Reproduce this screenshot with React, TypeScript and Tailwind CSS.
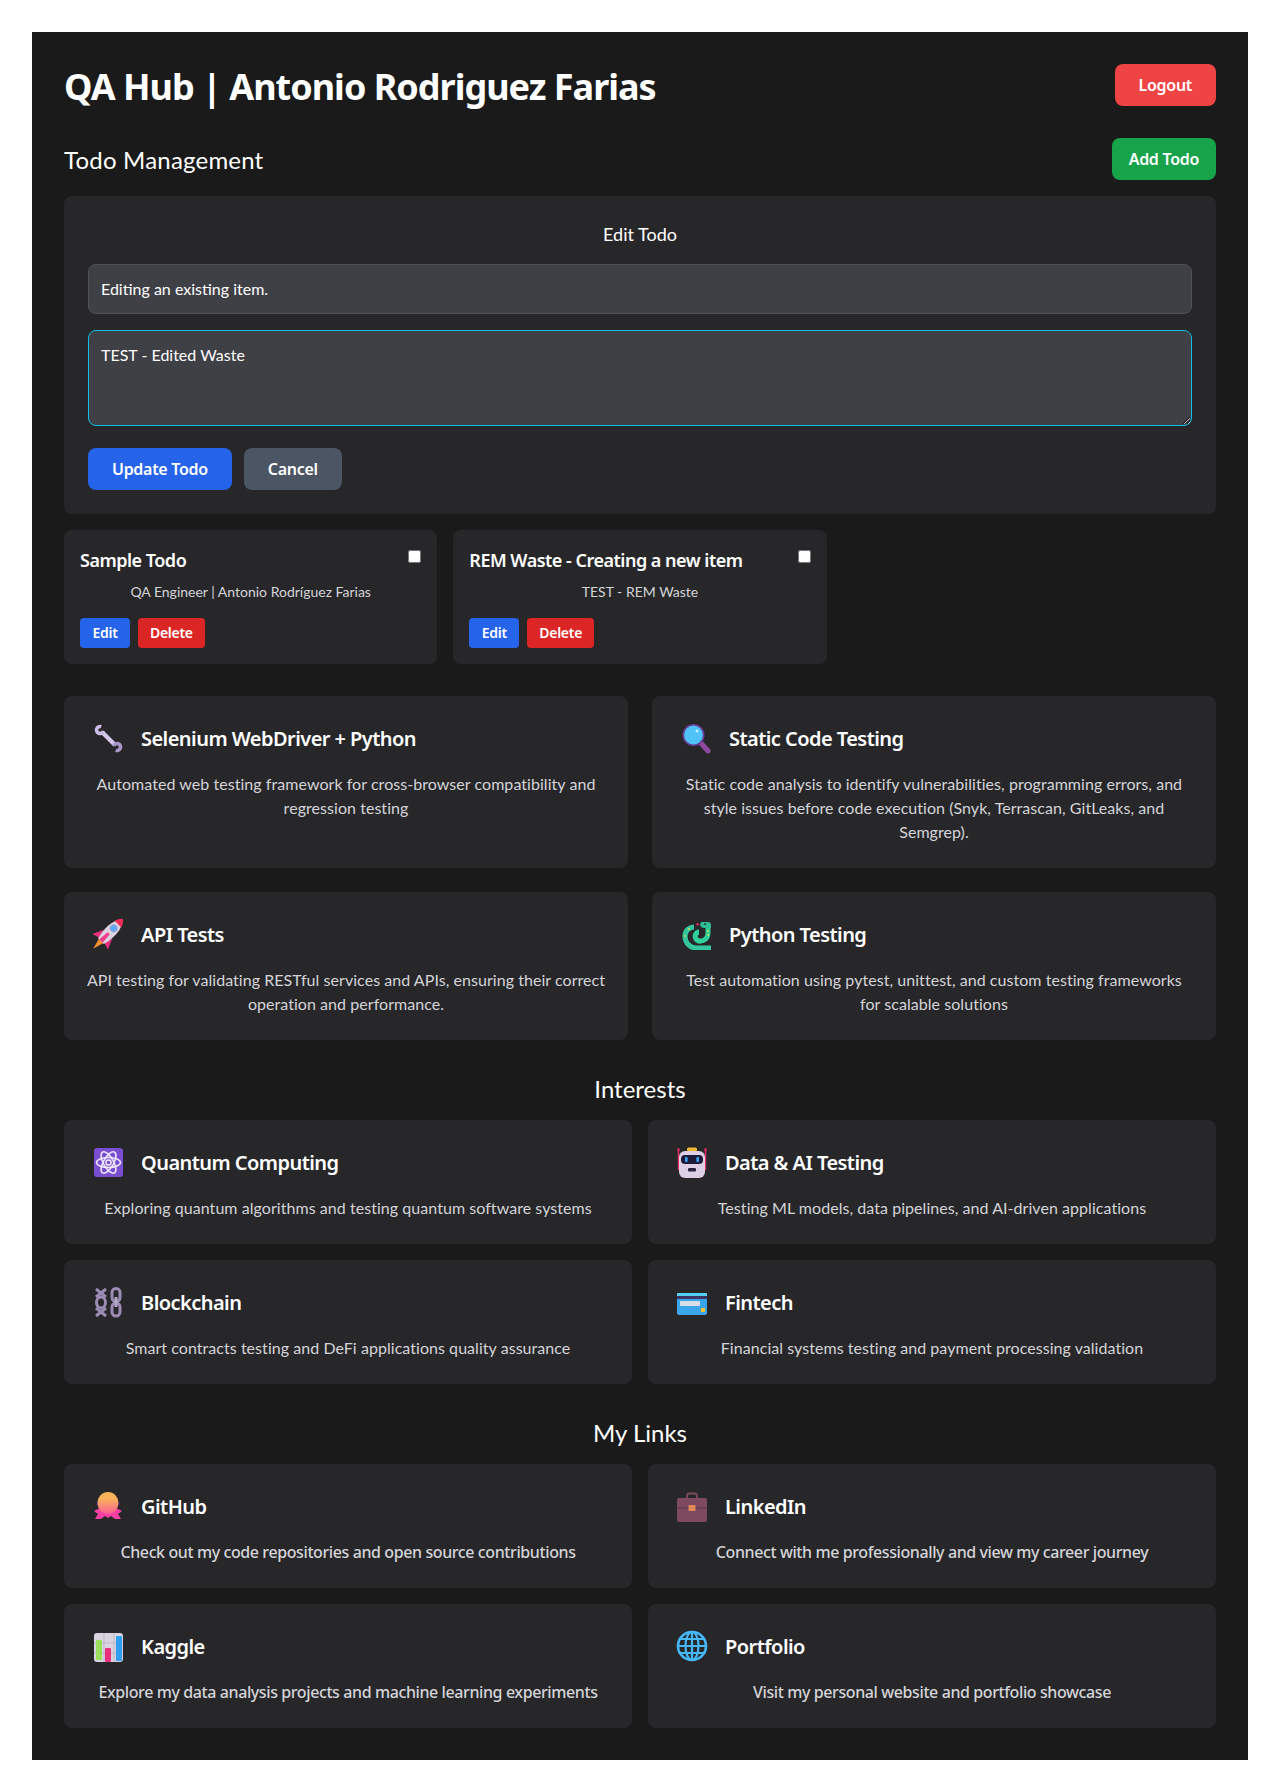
import type { ReactNode } from "react"

const Svg = ({ children }: { children: ReactNode }) => (
  <svg viewBox="0 0 32 32" className="w-8 h-8 shrink-0">
    {children}
  </svg>
)

const Wrench = () => (
  <Svg>
    <path d="M10 10 L23 23" stroke="#d6c8ec" strokeWidth="4.2" />
    <path d="M9.2 4.7 A3.5 3.5 0 1 0 11.3 9.2" fill="none" stroke="#cbbce4" strokeWidth="3.6" />
    <path d="M23.8 28.3 A3.5 3.5 0 1 0 21.7 23.8" fill="none" stroke="#a898ca" strokeWidth="3.6" />
  </Svg>
)

const Magnifier = () => (
  <Svg>
    <path d="M20 20 L28 29" stroke="#8f4aa0" strokeWidth="5" strokeLinecap="round" />
    <circle cx="13.5" cy="13" r="10.2" fill="#4fc3f7" stroke="#6b3d96" strokeWidth="1.6" />
    <circle cx="17" cy="9" r="1.6" fill="#b8ecff" />
  </Svg>
)

const Rocket = () => (
  <Svg>
    <g transform="rotate(45 16 16)">
      <path d="M13 26 L19 26 L16 37 Z" fill="#f5902e" />
      <path d="M10 16 L5 27 L12 25 Z" fill="#ec2f7e" />
      <path d="M22 16 L27 27 L20 25 Z" fill="#ec2f7e" />
      <path d="M16 -5 C23 2 23 16 20 26 L12 26 C9 16 9 2 16 -5 Z" fill="#dcd4e2" />
      <path d="M16 -5 C18.5 -3 20 -0.5 20.7 2 L11.3 2 C12 -0.5 13.5 -3 16 -5 Z" fill="#ef2b55" />
      <circle cx="16" cy="8" r="3.4" fill="#5aa9fa" stroke="#9aa0c8" strokeWidth="1" />
      <path d="M13.5 26 L18.5 26 L17.5 15 L14.5 15 Z" fill="#f0408c" />
    </g>
  </Svg>
)

const Snake = () => (
  <Svg>
    <path d="M31 30 H17 C9 30 5 24 5 18 C5 12 10 9 14 9" fill="none" stroke="#35c6a0" strokeWidth="5" />
    <path d="M28 7 V15 C28 23 19 25 16 21 C14 18 16 14 19 14" fill="none" stroke="#2fcf9a" strokeWidth="5" />
    <path d="M21 4 H28 Q31 4 31 7 V10 H24 Q21 10 20 7 Z" fill="#2dbd96" />
    <path d="M20 6 L16 5 L17 8 Z" fill="#e8275f" />
    <circle cx="25" cy="6" r="0.9" fill="#14302c" />
    <circle cx="28" cy="13" r="0.9" fill="#d6e04a" />
    <circle cx="28" cy="17" r="0.9" fill="#d6e04a" />
    <circle cx="5" cy="18" r="0.9" fill="#d6e04a" />
    <circle cx="9" cy="11" r="0.9" fill="#d6e04a" />
  </Svg>
)

const Atom = () => (
  <Svg>
    <rect x="2" y="2" width="29" height="29" rx="3" fill="#7a4ed0" />
    <g fill="none" stroke="#f1e9ff" strokeWidth="1.5">
      <ellipse cx="16.5" cy="16.5" rx="12" ry="5" />
      <ellipse cx="16.5" cy="16.5" rx="12" ry="5" transform="rotate(60 16.5 16.5)" />
      <ellipse cx="16.5" cy="16.5" rx="12" ry="5" transform="rotate(120 16.5 16.5)" />
      <circle cx="16.5" cy="16.5" r="2.6" />
    </g>
  </Svg>
)

const Robot = () => (
  <Svg>
    <path d="M2.5 4 V24 M29.5 4 V24" stroke="#e8285f" strokeWidth="1.4" />
    <circle cx="2.5" cy="3.5" r="1.2" fill="#ef2b6b" />
    <circle cx="29.5" cy="3.5" r="1.2" fill="#ef2b6b" />
    <rect x="11" y="1.5" width="10" height="4" rx="1.5" fill="#f2b632" />
    <rect x="3" y="5" width="26" height="27" rx="6" fill="#dccfe6" />
    <rect x="5" y="9" width="22" height="9" rx="4" fill="#1e1b3a" />
    <rect x="9" y="11" width="2.6" height="5" rx="1" fill="#38a6f5" />
    <rect x="20.4" y="11" width="2.6" height="5" rx="1" fill="#38a6f5" />
    <rect x="12" y="22" width="8" height="3.4" rx="1.2" fill="#2b2540" />
  </Svg>
)

const Chain = () => (
  <Svg>
    <g fill="none" stroke="#9c8cb4" strokeWidth="3">
      <ellipse cx="9" cy="16.5" rx="4.5" ry="5.5" />
      <path d="M4 3 L14 11 M14 3 L4 11 M4 22 L14 30 M14 22 L4 30" />
      <rect x="20" y="2.5" width="8" height="13" rx="4" />
      <rect x="20" y="17" width="8" height="13" rx="4" />
    </g>
    <path d="M24 11 V21" stroke="#b5a8c8" strokeWidth="3" />
  </Svg>
)

const CreditCard = () => (
  <Svg>
    <rect x="1" y="7" width="30" height="22" rx="2" fill="#38a6e8" />
    <rect x="1" y="7" width="30" height="3.5" fill="#4fd0f0" />
    <rect x="1" y="10" width="30" height="3" fill="#3b3566" />
    <rect x="4" y="15" width="20" height="5" rx="1" fill="#d9dde6" />
    <rect x="25" y="22" width="4" height="4" fill="#f4c430" />
  </Svg>
)

const Octopus = () => (
  <Svg>
    <circle cx="5.5" cy="14" r="1.6" fill="#3d2a6b" />
    <circle cx="26.5" cy="14" r="1.6" fill="#3d2a6b" />
    <path d="M2 21 L8 18 H24 L30 21 L26 24 L29 29 L23 29 L19 26 L16 28 L13 26 L9 29 L3 29 L6 24 Z" fill="#f63fa2" />
    <ellipse cx="16" cy="13" rx="10.5" ry="11" fill="url(#octo)" />
    <defs>
      <linearGradient id="octo" x1="0" y1="0" x2="0" y2="1">
        <stop offset="0.3" stopColor="#f7b25a" />
        <stop offset="1" stopColor="#fb5f94" />
      </linearGradient>
    </defs>
  </Svg>
)

const Briefcase = () => (
  <Svg>
    <path d="M11 9 V6 Q11 3.5 13.5 3.5 H18.5 Q21 3.5 21 6 V9" fill="none" stroke="#7a4a5a" strokeWidth="1.8" />
    <rect x="1" y="8" width="30" height="24" rx="2" fill="#7d4a60" />
    <path d="M1 18 H31" stroke="#5d3450" strokeWidth="1" />
    <rect x="12.5" y="15" width="7" height="6" rx="1" fill="#e08a5a" />
  </Svg>
)

const Bars = () => (
  <Svg>
    <rect x="2" y="3" width="29" height="29" rx="3" fill="#d8d4e0" />
    <path d="M12 3 V32 M22 3 V32 M2 13 H31 M2 23 H31" stroke="#bdb8c8" strokeWidth="1" />
    <rect x="4" y="10" width="6" height="20" rx="1" fill="#9be05a" />
    <rect x="13" y="18" width="6" height="14" rx="1" fill="#ea2f7c" />
    <rect x="24" y="6" width="6" height="25" rx="1" fill="#2f9df0" />
  </Svg>
)

const Globe = () => (
  <Svg>
    <g fill="none" stroke="#45b8fa" strokeWidth="2.2">
      <circle cx="16" cy="16" r="14" strokeWidth="2.6" />
      <ellipse cx="16" cy="16" rx="6.5" ry="14" />
      <path d="M16 2 V30 M2 16 H30 M4 9 H28 M4 23 H28" />
    </g>
  </Svg>
)

const heavy = "font-['Noto_Sans',sans-serif] font-semibold"

function InfoCard({ icon, title, text, links }: { icon: ReactNode; title: string; text: string; links?: boolean }) {
  return (
    <div className="bg-[#27272a] rounded-lg p-6">
      <div className="flex items-center gap-[13px] h-9 mb-4">
        <div className="w-10 flex justify-center shrink-0">{icon}</div>
        <h3 className={`${heavy} text-xl tracking-[-0.55px] pt-0.5 text-white`}>{title}</h3>
      </div>
      <p
        className={
          links
            ? "-mx-0.5 text-center text-[#d4d4d8] font-['Noto_Sans',sans-serif] font-medium tracking-[-0.4px]"
            : "-mx-0.5 text-center text-[#d4d4d8] tracking-[0.05px]"
        }
      >
        {text}
      </p>
    </div>
  )
}

function TodoCard({ title, text }: { title: string; text: string }) {
  return (
    <div className="bg-[#27272a] rounded-lg p-4">
      <div className="flex justify-between items-start mb-2">
        <h3 className={`${heavy} text-lg tracking-[-0.5px] text-white`}>{title}</h3>
        <input type="checkbox" className="w-[13px] h-[13px] mt-1" />
      </div>
      <p className="text-sm text-center text-[#d4d4d8]">{text}</p>
      <div className="flex gap-2 mt-4">
        <button className={`${heavy} h-[30px] px-[12.5px] rounded bg-[#2563eb] text-white text-sm tracking-[-0.3px]`}>Edit</button>
        <button className={`${heavy} h-[30px] px-3 rounded bg-[#dc2626] text-white text-sm tracking-[-0.3px]`}>Delete</button>
      </div>
    </div>
  )
}

export default function App() {
  return (
    <div className="bg-white p-8 font-['Lato','Liberation_Sans',sans-serif]">
      <div className="bg-[#1a1a1a] p-8 text-white h-[1728px]">
        <div className="flex justify-between items-center mb-8">
          <h1 className="font-['Noto_Sans',sans-serif] font-bold text-4xl leading-[38px] tracking-[-1px] pt-1">QA Hub | Antonio Rodriguez Farias</h1>
          <button className={`${heavy} h-[42px] px-6 rounded-lg bg-[#ef4444] text-white tracking-[-0.3px]`}>Logout</button>
        </div>

        <div className="flex justify-between items-center mb-4">
          <h2 className="text-2xl tracking-[0.2px] pt-0.5">Todo Management</h2>
          <button className={`${heavy} h-[42px] px-[17px] rounded-lg bg-[#16a34a] text-white tracking-[-0.3px]`}>Add Todo</button>
        </div>

        <div className="bg-[#27272a] rounded-lg p-6 mb-4">
          <h3 className="text-lg text-center mb-4">Edit Todo</h3>
          <input
            defaultValue="Editing an existing item."
            className="block w-full py-3 px-3 mb-4 rounded-lg bg-[#3f3f46] border border-[#52525b] text-white"
          />
          <textarea
            defaultValue="TEST - Edited Waste"
            className="block w-full h-24 py-3 px-3 mb-[22px] rounded-lg bg-[#3f3f46] border border-[#0cc0e4] text-white"
          />
          <div className="flex gap-3">
            <button className={`${heavy} h-[42px] px-6 rounded-lg bg-[#2563eb] text-white tracking-[-0.3px]`}>Update Todo</button>
            <button className={`${heavy} h-[42px] px-6 rounded-lg bg-[#4b5563] text-white tracking-[-0.3px]`}>Cancel</button>
          </div>
        </div>

        <div className="grid grid-cols-3 gap-4 mb-8">
          <TodoCard title="Sample Todo" text="QA Engineer | Antonio Rodríguez Farias" />
          <TodoCard title="REM Waste - Creating a new item" text="TEST - REM Waste" />
        </div>

        <div className="grid grid-cols-2 gap-6">
          <InfoCard
            icon={<Wrench />}
            title="Selenium WebDriver + Python"
            text="Automated web testing framework for cross-browser compatibility and regression testing"
          />
          <InfoCard
            icon={<Magnifier />}
            title="Static Code Testing"
            text="Static code analysis to identify vulnerabilities, programming errors, and style issues before code execution (Snyk, Terrascan, GitLeaks, and Semgrep)."
          />
          <InfoCard
            icon={<Rocket />}
            title="API Tests"
            text="API testing for validating RESTful services and APIs, ensuring their correct operation and performance."
          />
          <InfoCard
            icon={<Snake />}
            title="Python Testing"
            text="Test automation using pytest, unittest, and custom testing frameworks for scalable solutions"
          />
        </div>

        <h2 className="text-2xl text-center mt-[33px] mb-[15px]">Interests</h2>
        <div className="grid grid-cols-2 gap-4">
          <InfoCard icon={<Atom />} title="Quantum Computing" text="Exploring quantum algorithms and testing quantum software systems" />
          <InfoCard icon={<Robot />} title="Data & AI Testing" text="Testing ML models, data pipelines, and AI-driven applications" />
          <InfoCard icon={<Chain />} title="Blockchain" text="Smart contracts testing and DeFi applications quality assurance" />
          <InfoCard icon={<CreditCard />} title="Fintech" text="Financial systems testing and payment processing validation" />
        </div>

        <h2 className="text-2xl text-center mt-[33px] mb-[15px]">My Links</h2>
        <div className="grid grid-cols-2 gap-4">
          <InfoCard links icon={<Octopus />} title="GitHub" text="Check out my code repositories and open source contributions" />
          <InfoCard links icon={<Briefcase />} title="LinkedIn" text="Connect with me professionally and view my career journey" />
          <InfoCard links icon={<Bars />} title="Kaggle" text="Explore my data analysis projects and machine learning experiments" />
          <InfoCard links icon={<Globe />} title="Portfolio" text="Visit my personal website and portfolio showcase" />
        </div>
      </div>
    </div>
  )
}
